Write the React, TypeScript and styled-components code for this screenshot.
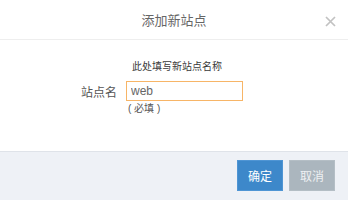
import React from 'react';
import styled, {createGlobalStyle} from 'styled-components';

const GlobalStyle = createGlobalStyle`
  html, body {
    margin: 0;
    padding: 0;
    background: #fff;
  }
  body {
    font-family: "Liberation Sans", "Noto Sans CJK SC", sans-serif;
    color: #555;
  }
  * {
    box-sizing: border-box;
  }
`;

const Dialog = styled.div`
  width: 348px;
  height: 200px;
  display: flex;
  flex-direction: column;
  background: white;
`;

const Header = styled.div`
  height: 40px;
  flex: none;
  display: flex;
  align-items: center;
  justify-content: center;
  position: relative;
  border-bottom: 1px solid #eeeeee;
`;

const Title = styled.h3`
  margin: 0;
  font-size: 13px;
  font-weight: normal;
  color: #666;
  line-height: 18px;
  margin-top: 2px;
`;

const Close = styled.button`
  position: absolute;
  right: 12px;
  top: 16px;
  width: 11px;
  height: 11px;
  padding: 0;
  border: none;
  background: none;
  display: flex;
`;

const Body = styled.div`
  flex: 1;
  padding-top: 20px;
`;

const Form = styled.div`
  display: grid;
  grid-template-columns: 117px 117px;
  column-gap: 9px;
  align-items: center;
`;

const Hint = styled.div`
  grid-column: 2;
  font-size: 10px;
  line-height: 14px;
  color: #3a3a3a;
  padding-left: 6px;
  margin-bottom: 7px;
`;

const Label = styled.label`
  grid-column: 1;
  text-align: right;
  font-size: 12px;
  color: #555;
`;

const Input = styled.input`
  grid-column: 2;
  width: 117px;
  height: 20px;
  border: 1px solid #f7b567;
  outline: none;
  padding: 0 4px;
  font-family: "Liberation Sans", sans-serif;
  font-size: 12px;
  color: #666;
`;

const Note = styled.div`
  grid-column: 2;
  font-size: 10px;
  line-height: 13px;
  color: #555;
  padding: 1px 0 0 2px;
`;

const Footer = styled.div`
  height: 49px;
  flex: none;
  background: #eef1f6;
  border-top: 1px solid #dfe3e9;
  display: flex;
  justify-content: flex-end;
  gap: 6px;
  padding: 8px 13px 0 0;
`;

const Button = styled.button<{$primary?: boolean}>`
  width: 46px;
  height: 31px;
  border: 1px solid ${p => p.$primary ? '#4f95d4' : '#b4bec5'};
  background: ${p => p.$primary ? '#3d88ca' : '#abb6be'};
  color: ${p => p.$primary ? '#fff' : '#eef0f2'};
  font-family: "Noto Sans CJK SC", sans-serif;
  font-size: 12px;
  padding: 0;
`;

export default function App() {
  return (
    <>
      <GlobalStyle/>
      <Dialog>
        <Header>
          <Title>添加新站点</Title>
          <Close aria-label="close">
            <svg width="11" height="11" viewBox="0 0 11 11">
              <path d="M1 1L10 10M10 1L1 10" stroke="#c2c2c2" strokeWidth="1.7"/>
            </svg>
          </Close>
        </Header>
        <Body>
          <Form>
            <Hint>此处填写新站点名称</Hint>
            <Label>站点名</Label>
            <Input defaultValue="web"/>
            <Note>( 必填 )</Note>
          </Form>
        </Body>
        <Footer>
          <Button $primary>确定</Button>
          <Button>取消</Button>
        </Footer>
      </Dialog>
    </>
  );
}
